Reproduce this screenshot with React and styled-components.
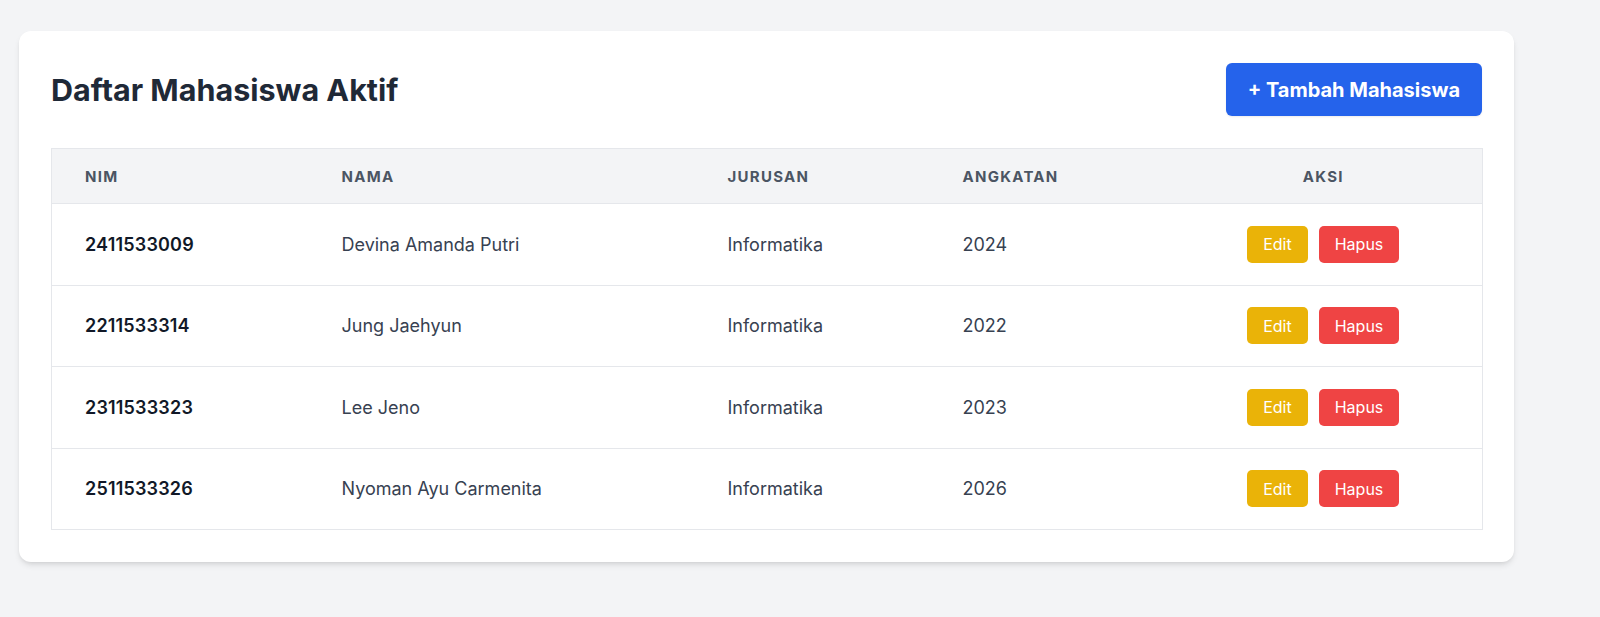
import React from 'react';
import styled, { createGlobalStyle } from 'styled-components';

const students = [
    { nim: '2411533009', nama: 'Devina Amanda Putri', jurusan: 'Informatika', angkatan: '2024' },
    { nim: '2211533314', nama: 'Jung Jaehyun', jurusan: 'Informatika', angkatan: '2022' },
    { nim: '2311533323', nama: 'Lee Jeno', jurusan: 'Informatika', angkatan: '2023' },
    { nim: '2511533326', nama: 'Nyoman Ayu Carmenita', jurusan: 'Informatika', angkatan: '2026' },
];

const columns = [
    { label: 'NIM', w: '257px' },
    { label: 'Nama', w: '386px' },
    { label: 'Jurusan', w: '235px' },
    { label: 'Angkatan', w: '235px' },
    { label: 'Aksi', w: '318px', center: true },
];

export default function App() {
    return (
        <Page>
            <GlobalStyle />
            <Card>
                <Header>
                    <Title>Daftar Mahasiswa Aktif</Title>
                    <AddButton type="button">+ Tambah Mahasiswa</AddButton>
                </Header>
                <Table>
                    <colgroup>
                        {columns.map(c => <col key={c.label} style={{ width: c.w }} />)}
                    </colgroup>
                    <thead>
                        <tr>
                            {columns.map(c => (
                                <Th key={c.label} center={c.center}>{c.label}</Th>
                            ))}
                        </tr>
                    </thead>
                    <tbody>
                        {students.map(s => (
                            <tr key={s.nim}>
                                <NimCell>{s.nim}</NimCell>
                                <Td>{s.nama}</Td>
                                <Td>{s.jurusan}</Td>
                                <Td>{s.angkatan}</Td>
                                <ActionCell>
                                    <Actions>
                                        <SmallButton type="button" color="#eab308">Edit</SmallButton>
                                        <SmallButton type="button" color="#ef4444">Hapus</SmallButton>
                                    </Actions>
                                </ActionCell>
                            </tr>
                        ))}
                    </tbody>
                </Table>
            </Card>
        </Page>
    );
}

const GlobalStyle = createGlobalStyle`
    body {
        margin: 0;
        background: #f3f4f6;
        font-family: Inter, "Noto Sans", "Liberation Sans", sans-serif;
    }
    * { box-sizing: border-box; }
`;

const Page = styled.main`
    min-height: 617px;
    padding: 31px 0 0 19px;
`;

const Card = styled.section`
    width: 1495px;
    padding: 32px;
    background: #ffffff;
    border-radius: 12px;
    box-shadow: 0 4px 6px -1px rgba(0, 0, 0, 0.1), 0 2px 4px -2px rgba(0, 0, 0, 0.1);
`;

const Header = styled.div`
    display: flex;
    align-items: center;
    justify-content: space-between;
    margin-bottom: 32px;
`;

const Title = styled.h1`
    margin: 0;
    font-size: 30.5px;
    font-weight: 700;
    color: #1f2937;
`;

const AddButton = styled.button`
    height: 53px;
    padding: 0 22px;
    border: 0;
    border-radius: 6px;
    background: #2563eb;
    color: #ffffff;
    font-family: inherit;
    font-size: 20px;
    font-weight: 700;
    box-shadow: 0 1px 2px rgba(0, 0, 0, 0.08);
`;

// Table
const line = '#e5e7eb';

const Table = styled.table`
    width: 100%;
    table-layout: fixed;
    border-collapse: collapse;
    border: 1px solid ${line};
`;

const Th = styled.th`
    height: 55px;
    padding: 0 33px;
    background: #f3f4f6;
    border-bottom: 1px solid ${line};
    text-align: ${props => props.center ? 'center' : 'left'};
    text-transform: uppercase;
    font-size: 15px;
    font-weight: 700;
    letter-spacing: 0.085em;
    color: #4b5563;
`;

const Td = styled.td`
    height: 81.5px;
    padding: 0 33px;
    border-bottom: 1px solid ${line};
    font-size: 18px;
    color: #374151;
`;

const NimCell = styled(Td)`
    font-weight: 600;
    letter-spacing: 0.01em;
    color: #111827;
`;

const ActionCell = styled(Td)`
    padding: 0;
`;

const Actions = styled.div`
    display: flex;
    justify-content: center;
    gap: 11px;
`;

const SmallButton = styled.button`
    height: 37px;
    padding: 0 16px;
    border: 0;
    border-radius: 5px;
    background: ${props => props.color};
    color: #ffffff;
    font-family: inherit;
    font-size: 16px;
`;
